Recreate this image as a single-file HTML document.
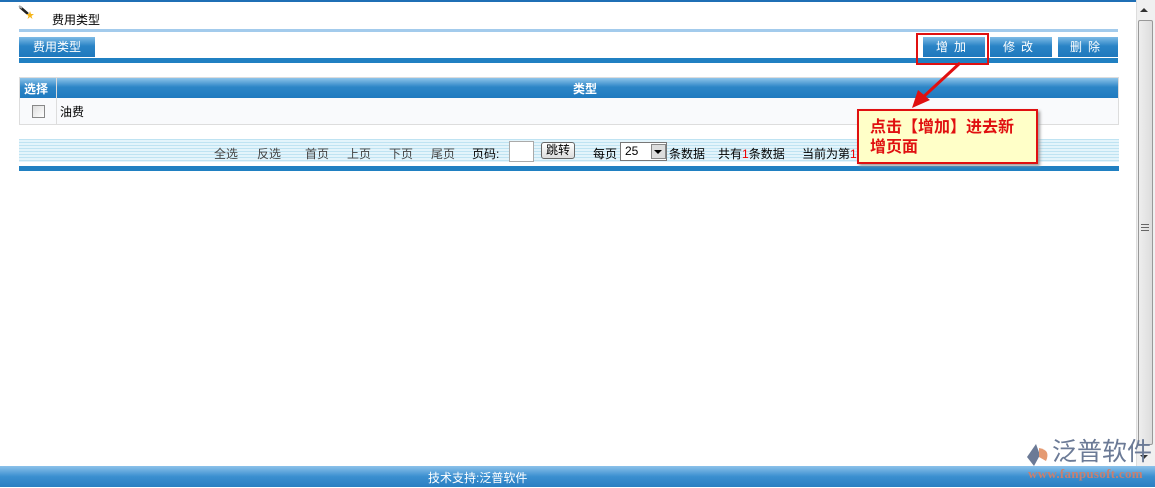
<!DOCTYPE html>
<html><head><meta charset="utf-8"><style>
*{margin:0;padding:0;box-sizing:border-box}
body{width:1155px;height:488px;background:#fff;position:relative;overflow:hidden;font:12px "Liberation Sans","Noto Sans CJK SC",sans-serif;color:#000}
.a{position:absolute}
.btn{position:absolute;top:37px;height:20px;background:linear-gradient(#7fbbe6,#2a84c6 45%,#1f78bd);color:#fff;text-align:center;line-height:20px;letter-spacing:6px;font-size:12px}
.pg{position:absolute;top:145px;font-size:12px;color:#444}
</style></head><body>
<div class="a" style="left:0;top:0;width:1155px;height:2px;background:#1f6fb5"></div>
<svg class="a" style="left:18px;top:5px" width="20" height="14"><line x1="2" y1="2" x2="10" y2="9" stroke="#222" stroke-width="2.5"/><line x1="1" y1="1" x2="4" y2="3" stroke="#aaa" stroke-width="2"/><polygon points="12,6 13,9 16,9 13.5,11 14.5,14 12,12 9.5,14 10.5,11 8,9 11,9" fill="#f5b51a"/></svg>
<div class="a" style="left:52px;top:11px">费用类型</div>
<div class="a" style="left:19px;top:29px;width:1099px;height:3px;background:#a3cbec"></div>
<div class="btn" style="left:19px;width:76px;letter-spacing:0">费用类型</div>
<div class="a" style="left:19px;top:58px;width:1099px;height:5px;background:#2080c2"></div>
<div class="btn" style="left:923px;width:62px">增加</div>
<div class="btn" style="left:990px;width:62px">修改</div>
<div class="btn" style="left:1058px;width:60px">删除</div>
<div class="a" style="left:916px;top:33px;width:73px;height:32px;border:2px solid #e01010"></div>
<!-- table -->
<div class="a" style="left:19px;top:77px;width:1100px;height:48px;border:1px solid #ddd;background:#f9fafc"></div>
<div class="a" style="left:20px;top:78px;width:1098px;height:20px;background:linear-gradient(#8ec4ea,#2d86c7 45%,#1f7abf)"></div>
<div class="a" style="left:56px;top:78px;width:1px;height:46px;background:#ddd"></div>
<div class="a" style="left:24px;top:80px;color:#fff;font-weight:bold">选择</div>
<div class="a" style="left:573px;top:80px;color:#fff;font-weight:bold">类型</div>
<div class="a" style="left:32px;top:105px;width:13px;height:13px;border:1px solid #888;background:linear-gradient(135deg,#ddd,#fff)"></div>
<div class="a" style="left:60px;top:103px">油费</div>
<!-- pager -->
<div class="a" style="left:19px;top:139px;width:1100px;height:23px;background:repeating-linear-gradient(#bfe3f2 0 1px,#e3f4fb 1px 3px)"></div>
<div class="a" style="left:19px;top:166px;width:1100px;height:5px;background:#2080c2"></div>
<div class="pg" style="left:214px">全选</div>
<div class="pg" style="left:257px">反选</div>
<div class="pg" style="left:305px">首页</div>
<div class="pg" style="left:347px">上页</div>
<div class="pg" style="left:389px">下页</div>
<div class="pg" style="left:431px">尾页</div>
<div class="pg" style="left:472px;color:#000">页码:</div>
<div class="a" style="left:509px;top:141px;width:25px;height:21px;background:#fff;border:1px solid #aaa"></div>
<div class="a" style="left:541px;top:142px;width:34px;height:17px;border:1px solid #666;border-radius:3px;background:linear-gradient(#fff,#ddd);text-align:center;line-height:15px">跳转</div>
<div class="pg" style="left:593px;color:#000">每页</div>
<div class="a" style="left:620px;top:142px;width:47px;height:19px;border:1px solid #777;background:#fff;padding-left:4px;line-height:17px">25</div>
<div class="a" style="left:651px;top:144px;width:15px;height:15px;background:#ddd;border:1px solid #888"></div>
<div class="a" style="left:654px;top:150px;border-left:4px solid transparent;border-right:4px solid transparent;border-top:4px solid #000"></div>
<div class="pg" style="left:669px;color:#000">条数据</div>
<div class="pg" style="left:718px;color:#000">共有<span style="color:#e00">1</span>条数据</div>
<div class="pg" style="left:802px;color:#000">当前为第<span style="color:#e00">1</span></div>
<!-- callout -->
<svg class="a" style="left:900px;top:60px" width="80" height="55"><line x1="60" y1="3" x2="20" y2="40" stroke="#e01010" stroke-width="3"/><polygon points="12,48 18,30 30,40" fill="#e01010"/></svg>
<div class="a" style="left:857px;top:109px;width:181px;height:55px;background:#ffffc8;border:2px solid #e01010;box-shadow:2px 2px 3px #999;color:#e01010;font-weight:bold;font-size:16px;line-height:20px;padding:7px 0 0 11px">点击【增加】进去新<br>增页面</div>
<!-- scrollbar -->
<div class="a" style="left:1136px;top:0;width:19px;height:466px;background:#f0f0f0;border-left:1px solid #ddd"></div>
<div class="a" style="left:1140px;top:8px;border-left:4px solid transparent;border-right:4px solid transparent;border-bottom:4px solid #333"></div>
<div class="a" style="left:1138px;top:20px;width:15px;height:425px;border:1px solid #999;border-radius:2px;background:linear-gradient(90deg,#eee,#ddd)"></div>
<div class="a" style="left:1141px;top:224px;width:8px;height:7px;border-top:1px solid #666;border-bottom:1px solid #666"><div style="margin-top:2px;height:1px;background:#666"></div></div>
<div class="a" style="left:1140px;top:455px;border-left:4px solid transparent;border-right:4px solid transparent;border-top:4px solid #333"></div>
<!-- logo -->
<svg class="a" style="left:1025px;top:442px" width="28" height="26"><path d="M11 2 L2 15 L9 24 L15 13 Z" fill="#6b7a96"/><path d="M14 6 Q26 8 21 19 L14 15 Z" fill="#e59a72"/></svg>
<div class="a" style="left:1052px;top:437px;font-size:25px;color:#6b7a96;line-height:30px">泛普软件</div>
<!-- footer -->
<div class="a" style="left:0;top:466px;width:1155px;height:21px;background:linear-gradient(#8cc2ea,#3b8fd0 50%,#2a7fc2)"></div>
<div class="a" style="left:1028px;top:466px;font:bold 13px 'Liberation Serif',serif;color:#c88070;letter-spacing:0.3px">www.fanpusoft.com</div>
<div class="a" style="left:428px;top:469px;color:#fff">技术支持:泛普软件</div>
</body></html>
